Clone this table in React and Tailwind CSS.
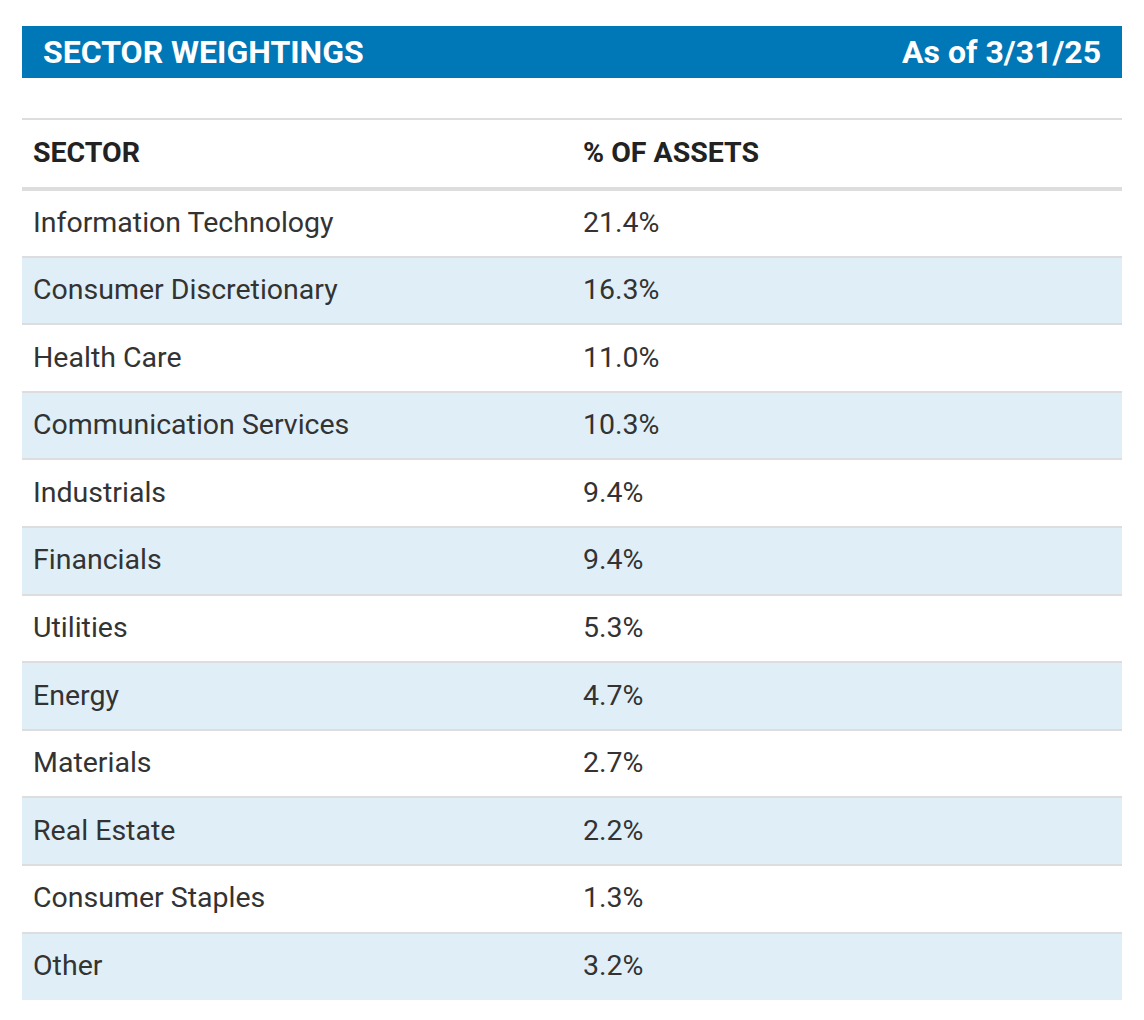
const rows = [
  ['Information Technology', '21.4%'],
  ['Consumer Discretionary', '16.3%'],
  ['Health Care', '11.0%'],
  ['Communication Services', '10.3%'],
  ['Industrials', '9.4%'],
  ['Financials', '9.4%'],
  ['Utilities', '5.3%'],
  ['Energy', '4.7%'],
  ['Materials', '2.7%'],
  ['Real Estate', '2.2%'],
  ['Consumer Staples', '1.3%'],
  ['Other', '3.2%'],
]

const App = () => {
  return (
    <div className="bg-white min-h-screen pt-[26px] px-[22px]" style={{ fontFamily: 'Roboto, "Liberation Sans", sans-serif' }}>
      <div className="w-[1100px]">
        <div className="flex items-center justify-between h-[52px] px-[21px] bg-[#0077b6] text-white font-bold text-[32px]">
          <span>SECTOR WEIGHTINGS</span>
          <span>As of 3/31/25</span>
        </div>
        <table className="w-full mt-[40px] border-collapse border-t-2 border-[#dddddd] text-[28.5px] text-[#333333]">
          <thead>
            <tr className="border-b-4 border-[#dddddd]">
              <th className="w-1/2 h-[70px] px-[11px] text-left font-bold text-[#222222]">SECTOR</th>
              <th className="w-1/2 h-[70px] px-[11px] text-left font-bold text-[#222222]">% OF ASSETS</th>
            </tr>
          </thead>
          <tbody>
            {rows.map(([name, pct], i) => (
              <tr key={name} className={(i % 2 === 1 ? 'bg-[#e0eff7] ' : 'bg-white ') + (i < rows.length - 1 ? 'border-b-2 border-[#dddddd]' : '')}>
                <td className="h-[67.6px] px-[11px]">{name}</td>
                <td className="h-[67.6px] px-[11px]">{pct}</td>
              </tr>
            ))}
          </tbody>
        </table>
      </div>
    </div>
  )
}

export default App
